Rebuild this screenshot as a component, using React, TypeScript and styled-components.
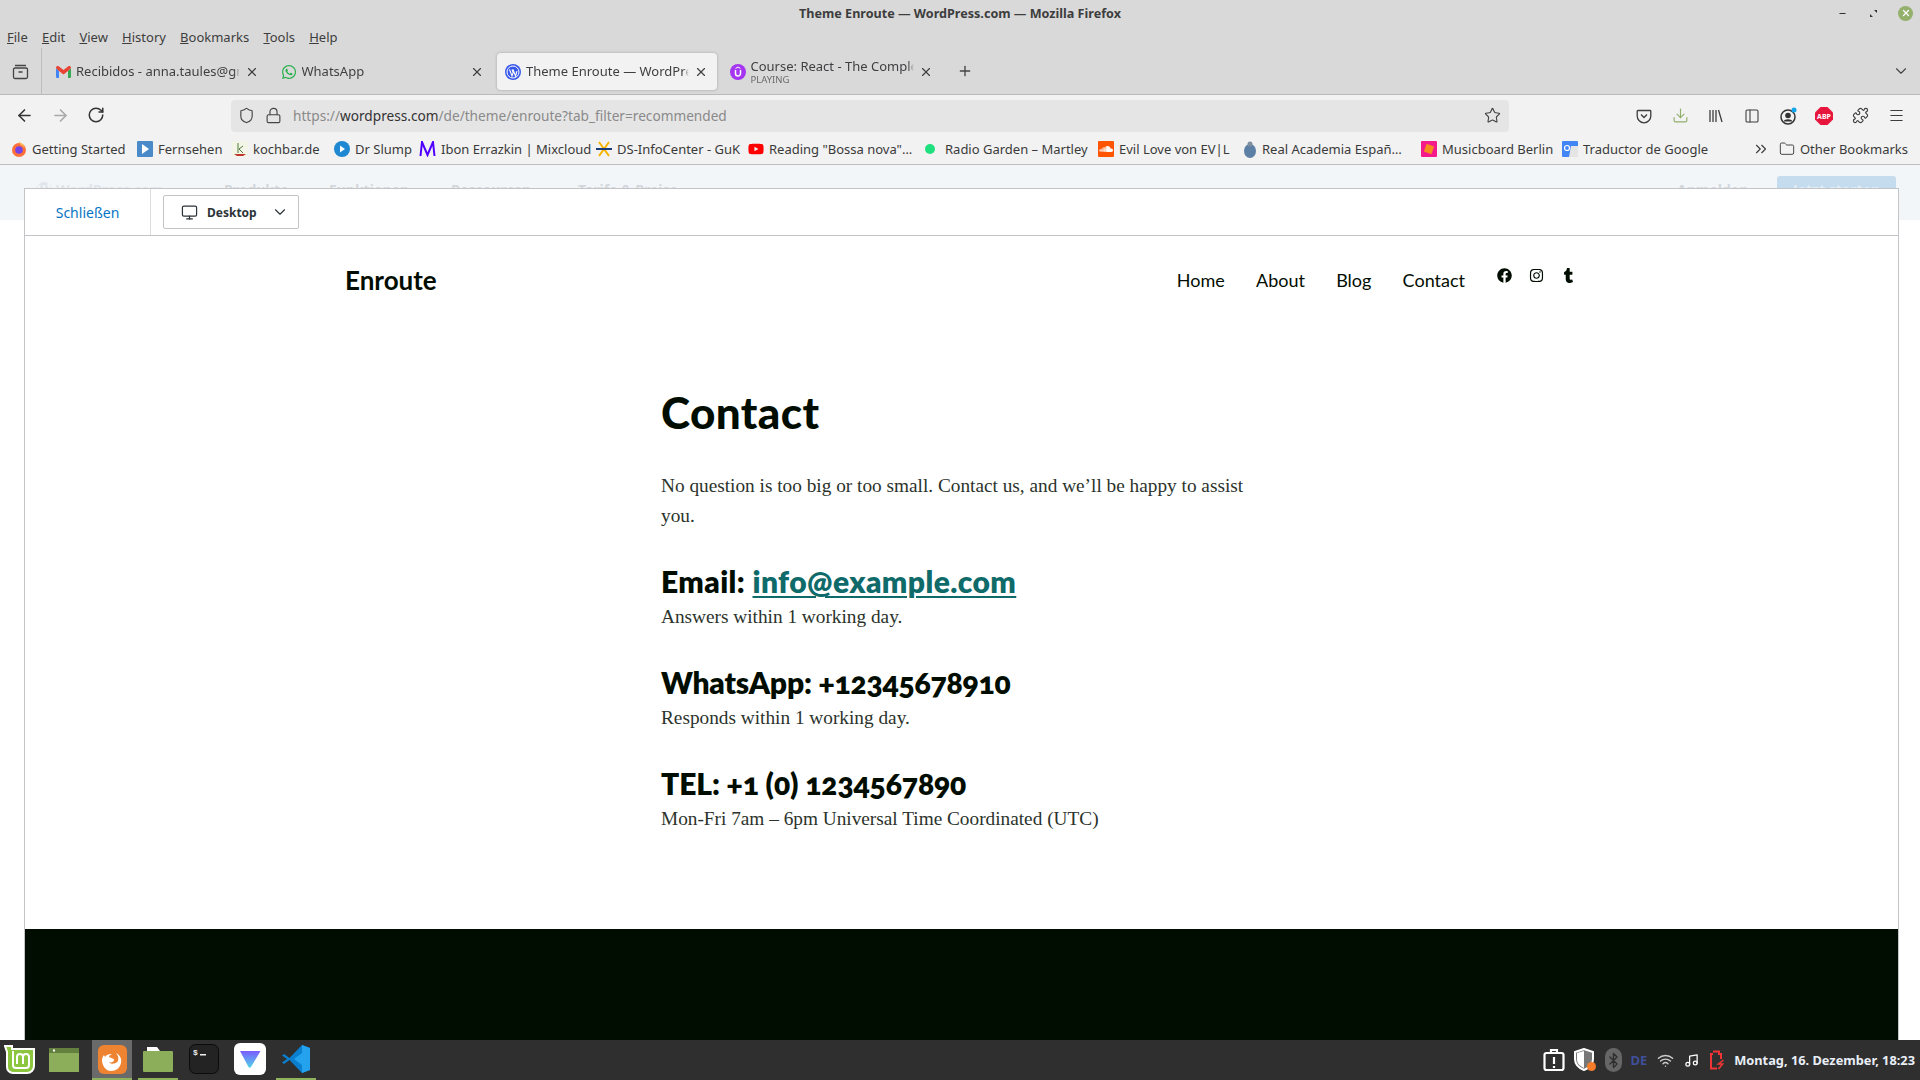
import { ReactNode } from "react"
import styled, { createGlobalStyle } from "styled-components"
import {
  ArrowLeft, ArrowRight, RotateCw, Shield, Lock, Star, Download, PanelLeft, Puzzle, Menu, X, Plus,
  ChevronDown, ChevronsRight, Folder, Monitor, Music, Wifi, Bluetooth, Minus,
} from "lucide-react"
import { FaFacebook, FaInstagram, FaTumblr, FaWhatsapp, FaYoutube, FaSoundcloud, FaWordpress } from "react-icons/fa"

const GlobalStyle = createGlobalStyle`
  html, body { margin: 0; padding: 0; background: #fff; }
  * { box-sizing: border-box; }
`

const Screen = styled.div`
  width: 1920px;
  height: 1080px;
  display: flex;
  flex-direction: column;
  overflow: hidden;
  font-family: "Noto Sans", sans-serif;
  color: #3a3a3c;
`

/* ---------- browser chrome ---------- */
const Chrome = styled.div`
  flex: none;
  background: #d9d9d9;
  height: 95px;
  border-bottom: 1px solid #b9b9b9;
  display: flex;
  flex-direction: column;
`
const TitleBar = styled.div`
  height: 26px;
  display: flex;
  align-items: center;
  justify-content: flex-end;
  position: relative;
  padding-right: 7px;
  gap: 19px;
`
const TitleText = styled.div`
  position: absolute;
  left: 0;
  right: 0;
  text-align: center;
  font: 700 12.6px "Noto Sans", sans-serif;
  color: #3d3d3d;
`
const CloseDot = styled.span`
  width: 15px;
  height: 15px;
  border-radius: 50%;
  background: #93b06d;
  color: #fff;
  display: flex;
  align-items: center;
  justify-content: center;
`
const WinBtn = styled.span`
  width: 12px;
  display: flex;
  justify-content: center;
  color: #333;
`
const MenuBar = styled.div`
  height: 22px;
  display: flex;
  align-items: center;
  padding-left: 7px;
  gap: 14.2px;
  font-size: 13px;
  color: #3d3d3d;
  span::first-letter { text-decoration: underline; }
`
const TabRow = styled.div`
  height: 46px;
  display: flex;
  align-items: center;
`
const SideBtn = styled.div`
  width: 42px;
  height: 46px;
  border-right: 1px solid #bdbdbd;
  display: flex;
  align-items: center;
  justify-content: center;
  color: #444;
  margin-right: 6px;
`
const Tab = styled.div<{ $active?: boolean }>`
  width: 220px;
  height: 37px;
  margin-top: 1px;
  margin-right: 4.5px;
  padding: 0 9px 0 8px;
  display: flex;
  align-items: center;
  gap: 5px;
  border-radius: 4px;
  font-size: 13px;
  color: #3f3f41;
  background: ${(p) => (p.$active ? "#f2f2f2" : "transparent")};
  box-shadow: ${(p) => (p.$active ? "0 0 3px rgba(0,0,0,.25)" : "none")};
`
const TabLabel = styled.div`
  flex: 1;
  min-width: 0;
  white-space: nowrap;
  overflow: hidden;
  line-height: 15px;
  mask-image: linear-gradient(to left, transparent 0, #000 6px);
`
const TabSub = styled.div`
  font-size: 9.5px;
  line-height: 11px;
  color: #6a6a6a;
`
const NewTab = styled.div`
  margin-left: 11px;
  display: flex;
  color: #444;
`
const TabEnd = styled.div`
  margin-left: auto;
  padding-right: 10px;
  display: flex;
  color: #444;
`
const NavBar = styled.div`
  flex: none;
  height: 37px;
  background: #f2f2f2;
  display: flex;
  align-items: center;
  padding-top: 4px;
`
const NavBtns = styled.div`
  width: 231px;
  padding-left: 15px;
  display: flex;
  gap: 17px;
  color: #333;
`
const UrlBar = styled.div`
  width: 1278px;
  height: 32px;
  border-radius: 4px;
  background: #e5e5e5;
  display: flex;
  align-items: center;
  padding: 0 8px 0 7px;
  color: #444;
`
const UrlLock = styled.span`
  margin-left: 10px;
  display: flex;
`
const UrlText = styled.div`
  margin-left: 11px;
  flex: 1;
  font-size: 13.65px;
  color: #8a8a8a;
  b { font-weight: 400; color: #333; }
`
const ToolIcons = styled.div`
  flex: 1;
  display: flex;
  align-items: center;
  padding-left: 126px;
  gap: 18px;
  color: #3d3d3d;
`
const IconSlot = styled.span`
  width: 18px;
  height: 18px;
  display: flex;
  align-items: center;
  justify-content: center;
  position: relative;
`
const Bookmarks = styled.div`
  flex: none;
  height: 33px;
  background: #f2f2f2;
  border-bottom: 1px solid #bdbdbd;
  display: flex;
  align-items: center;
  padding: 2px 12px 0 11px;
  font-size: 13px;
  color: #3a3a3a;
  white-space: nowrap;
`
const Bookmark = styled.div<{ $w: number }>`
  width: ${(p) => p.$w}px;
  display: flex;
  align-items: center;
  gap: 5px;
  flex: none;
  svg { flex: none; }
`
const BookmarkEnd = styled.div`
  margin-left: auto;
  display: flex;
  align-items: center;
  gap: 5px;
`
const OverflowChevron = styled.span`
  display: flex;
  margin-right: 4px;
`

/* ---------- wordpress.com page ---------- */
const Viewport = styled.div`
  flex: 1;
  min-height: 0;
  display: flex;
  flex-direction: column;
  background: linear-gradient(#f3f6f9 55px, #fff 55px);
`
const GhostNav = styled.div`
  height: 23px;
  flex: none;
  overflow: hidden;
  display: flex;
  padding-top: 11px;
  padding-left: 36px;
  padding-right: 24px;
  font-size: 14px;
  font-weight: 700;
  color: #d3d8dd;
  white-space: nowrap;
  line-height: 27px;
`
const GhostLogo = styled.span`
  width: 188px;
  flex: none;
  display: flex;
  gap: 4px;
  color: #dfe5ea;
  svg { margin-top: 5px; flex: none; }
`
const GhostItem = styled.span<{ $w: number }>`
  width: ${(p) => p.$w}px;
  flex: none;
`
const GhostRight = styled.span`
  margin-left: auto;
  width: 100px;
  flex: none;
`
const GhostCta = styled.span`
  width: 119px;
  height: 30px;
  border-radius: 3px;
  background: #c5dcee;
  color: #e4eef6;
  text-align: center;
`
const Preview = styled.div`
  flex: 1;
  min-height: 0;
  margin: 0 21px 0 24px;
  display: flex;
  flex-direction: column;
  background: #fff;
  border: solid #c3c4c7;
  border-width: 1px 1px 0 1px;
`
const PreviewBar = styled.div`
  flex: none;
  height: 47px;
  display: flex;
  align-items: stretch;
  border-bottom: 1px solid #c3c4c7;
`
const CloseLink = styled.a`
  width: 126px;
  border-right: 1px solid #dcdcde;
  display: flex;
  align-items: center;
  justify-content: center;
  font: 400 14px "Noto Sans", sans-serif;
  color: #0675c4;
`
const DeviceSelect = styled.div`
  margin: 6px 0 6px 12px;
  width: 136px;
  border: 1px solid #c3c4c7;
  border-radius: 2px;
  display: flex;
  align-items: center;
  padding: 0 9px 0 17px;
  color: #2c3338;
  font: 700 12px "Noto Sans", sans-serif;
  gap: 9px;
  svg:last-child { margin-left: auto; }
`
const Site = styled.div`
  flex: 1;
  min-height: 0;
  display: flex;
  flex-direction: column;
  font-family: Lato, sans-serif;
  color: #020d02;
`
const SiteHeader = styled.header`
  flex: none;
  height: 88px;
  margin: 0 320px;
  display: flex;
  align-items: center;
`
const Brand = styled.div`
  font: 700 26px Lato, sans-serif;
  flex: 1;
`
const SiteNav = styled.nav`
  display: flex;
  gap: 31.2px;
  font: 400 18px Lato, sans-serif;
`
const Socials = styled.div`
  margin-left: 32px;
  margin-right: 2px;
  display: flex;
  gap: 17px;
  margin-bottom: 9px;
`
const Main = styled.main`
  flex: 1;
  width: 590px;
  margin-left: 636px;
  padding-top: 62px;
`
const H1 = styled.h1`
  margin: 0 0 33px;
  font: 900 44px/52px Lato, sans-serif;
  letter-spacing: 0.4px;
`
const Para = styled.p<{ $gap?: number }>`
  margin: 0 0 ${(p) => p.$gap ?? 0}px;
  font: 400 19.3px/30px "Liberation Serif", serif;
  color: #2b332b;
`
const ContactNote = styled(Para)`
  padding-top: 2px;
`
const H3 = styled.h3<{ $track: number }>`
  margin: 0;
  font: 800 30px/37px Lato, sans-serif;
  font-variant-numeric: oldstyle-nums;
  letter-spacing: ${(p) => p.$track}px;
  a { color: #0f6a6a; text-decoration: underline; text-underline-offset: 3px; text-decoration-thickness: 2px; }
`
const Footer = styled.footer`
  flex: none;
  height: 111px;
  background: #020d02;
`

/* ---------- mint panel ---------- */
const Panel = styled.div`
  flex: none;
  height: 40px;
  background: #2f2f2f;
  display: flex;
  align-items: center;
  color: #fff;
`
const Launcher = styled.div`
  display: flex;
  gap: 6px;
  height: 100%;
`
const Slot = styled.div<{ $open?: boolean; $hot?: boolean; $nudge?: number }>`
  width: 40px;
  height: 40px;
  padding-right: ${(p) => p.$nudge ?? 0}px;
  display: flex;
  align-items: center;
  justify-content: center;
  background: ${(p) => (p.$hot ? "#6a6a6a" : "transparent")};
  border-bottom: 2px solid ${(p) => (p.$open ? "#8fb35c" : "transparent")};
`
const Tray = styled.div`
  margin-left: auto;
  display: flex;
  align-items: center;
  gap: 10px;
  padding-right: 5px;
`
const TrayGroup = styled.div`
  display: flex;
  align-items: center;
  gap: 8px;
`
const BtPill = styled.span`
  width: 17px;
  height: 24px;
  border-radius: 9px;
  background: #666;
  color: #2f2f2f;
  display: flex;
  align-items: center;
  justify-content: center;
`
const Clock = styled.div`
  font: 700 12.8px "Noto Sans", sans-serif;
  color: #e8eef6;
`
const LangTag = styled.span`
  font: 700 13px "Noto Sans", sans-serif;
  color: #3f4f9b;
`

/* ---------- small drawings ---------- */
const Box = ({ c, children }: { c: string; children?: ReactNode }) => (
  <svg width="16" height="16" viewBox="0 0 16 16">
    <rect width="16" height="16" fill={c} rx="1" />
    {children}
  </svg>
)
const Gmail = () => (
  <svg width="15" height="12" viewBox="0 0 15 12">
    <path d="M0 2v9a1 1 0 0 0 1 1h2V5z" fill="#4285f4" />
    <path d="M15 2v9a1 1 0 0 1-1 1h-2V5z" fill="#34a853" />
    <path d="M0 2c0-2 2-2.500 3-1.500l4.500 3.500L12 .5c1-1 3-.5 3 1.500L12 5 7.500 8.500 3 5z" fill="#ea4335" />
  </svg>
)
const WpIcon = () => (
  <svg width="16" height="16" viewBox="0 0 16 16">
    <circle cx="8" cy="8" r="8" fill="#3858e9" />
    <circle cx="8" cy="8" r="6" fill="none" stroke="#fff" />
    <path d="M4.500 5.500 7 12l1.200-3.500L7 5.500m1 0L10.500 12 12 7" fill="none" stroke="#fff" strokeWidth="1.100" />
  </svg>
)
const UdemyIcon = () => (
  <svg width="16" height="16" viewBox="0 0 16 16">
    <circle cx="8" cy="8" r="8" fill="#a435f0" />
    <path d="M5.500 6v3.500a2.500 2.500 0 0 0 5 0V6" fill="none" stroke="#fff" strokeWidth="1.500" />
    <path d="M5.500 4.500 8 3l2.500 1.500" fill="none" stroke="#fff" />
  </svg>
)
const FirefoxSmall = () => (
  <svg width="16" height="16" viewBox="0 0 16 16">
    <circle cx="8" cy="9" r="7" fill="#ff7139" />
    <path d="M8 0c1 2 5 3 6 7-3-3-6-3-6-7z" fill="#ffbd4f" />
    <circle cx="8" cy="9" r="3.800" fill="#7542e5" />
  </svg>
)
const ContainerIcon = () => (
  <svg width="17" height="17" viewBox="0 0 17 17" fill="none" stroke="#444" strokeWidth="1.300">
    <rect x="1.500" y="5" width="14" height="10.500" rx="1.500" />
    <path d="M3 2.500h11M6.500 9h4" />
  </svg>
)
const LibraryIcon = () => (
  <svg width="16" height="16" viewBox="0 0 16 16" fill="none" stroke="#3d3d3d" strokeWidth="1.300">
    <path d="M2 2v12M5 2v12M8 2v12M10.500 2l3.500 12" />
  </svg>
)
const PocketIcon = () => (
  <svg width="16" height="16" viewBox="0 0 16 16" fill="none" stroke="#3d3d3d" strokeWidth="1.300">
    <path d="M2 2.500h12a.8.8 0 0 1 .8.8V8a6.800 6.800 0 0 1-13.600 0V3.300a.8.8 0 0 1 .8-.8z" />
    <path d="m5 6.500 3 3 3-3" />
  </svg>
)
const ProfileIcon = () => (
  <svg width="18" height="18" viewBox="0 0 18 18">
    <circle cx="9" cy="10" r="7" fill="none" stroke="#333" strokeWidth="1.500" />
    <circle cx="9" cy="8.500" r="2.800" fill="#333" />
    <path d="M4.500 14.500c1-3 8-3 9 0z" fill="#333" />
    <circle cx="15" cy="3" r="2.500" fill="#12a5ee" />
  </svg>
)
const AbpIcon = () => (
  <svg width="18" height="18" viewBox="0 0 18 18">
    <path d="M5.500 0h7L18 5.500v7L12.500 18h-7L0 12.500v-7z" fill="#e6163d" />
    <text x="9" y="12" textAnchor="middle" fontSize="7" fontWeight="700" fill="#fff" fontFamily="Noto Sans">ABP</text>
  </svg>
)
const MintLogo = () => (
  <svg width="32" height="30" viewBox="0 0 32 30">
    <path d="M1 2h7v3c1 0 22 0 22 0v17a7 7 0 0 1-7 7H9a6 6 0 0 1-6-6V8z" fill="#8cc63f" stroke="#fff" strokeWidth="2" />
    <path d="M9 7v14a3 3 0 0 0 3 3h10a3 3 0 0 0 3-3v-8a3 3 0 0 0-6 0v7m0-7a3 3 0 0 0-6 0v7" fill="none" stroke="#fff" strokeWidth="2" />
  </svg>
)
const WindowIcon = () => (
  <svg width="30" height="25" viewBox="0 0 30 25">
    <rect width="30" height="24" y="1" fill="#8cae5b" />
    <rect width="30" height="5" y="1" fill="#64803f" />
    <rect x="4" y="2.500" width="2" height="2" fill="#fff" />
  </svg>
)
const FirefoxIcon = () => (
  <svg width="29" height="29" viewBox="0 0 29 29">
    <rect width="29" height="29" rx="6" fill="#ee8332" />
    <path d="M4 15c0-2 1-4 2-5l1 2c2-3 5-3 7-3-2 1-3 2-3 3 1 1 5 1 5 3 0 2-3 3-5 2 2 3 7 2 9-1 1-3 0-6-2-8 4 2 6 6 5 10-1 5-5 8-10 8-5 0-9-5-9-11z" fill="#fff" />
  </svg>
)
const FolderIcon = () => (
  <svg width="30" height="25" viewBox="0 0 30 25">
    <path d="M4 0h10l3 4H4z" fill="#fff" />
    <path d="M0 5a1 1 0 0 1 1-1h28a1 1 0 0 1 1 1v19a1 1 0 0 1-1 1H1a1 1 0 0 1-1-1z" fill="#8cae5b" />
  </svg>
)
const TerminalIcon = () => (
  <svg width="30" height="30" viewBox="0 0 30 30">
    <rect x=".5" y=".5" width="29" height="29" rx="6" fill="#232323" stroke="#0b0b0b" />
    <text x="4" y="11" fontSize="8" fontWeight="700" fill="#eee" fontFamily="Liberation Mono">$</text>
    <rect x="11" y="10" width="6" height="1.500" fill="#eee" />
  </svg>
)
const ProtonIcon = () => (
  <svg width="32" height="32" viewBox="0 0 32 32">
    <rect width="32" height="32" rx="6" fill="#fff" />
    <defs>
      <linearGradient id="pv" x1="0" y1="0" x2="0" y2="1">
        <stop offset="0" stopColor="#7c5cff" />
        <stop offset="1" stopColor="#4fd4e8" />
      </linearGradient>
    </defs>
    <path d="M6 8h20.500L17 24a1.500 1.500 0 0 1-2.500 0z" fill="url(#pv)" />
  </svg>
)
const VsCodeIcon = () => (
  <svg width="30" height="30" viewBox="0 0 30 30">
    <path d="M21 1 8.500 14 3 10 1 11.500 6 15l-5 3.500L3 20l5.500-4L21 29l8-3V4z" fill="#0a7fd0" />
    <path d="M21 1l8 3v22l-8 3zM21 9v12l-8-6z" fill="#24a2ee" fillRule="evenodd" />
  </svg>
)
const ClipIcon = () => (
  <svg width="22" height="24" viewBox="0 0 22 24" fill="none" stroke="#fff" strokeWidth="2.200">
    <rect x="1.500" y="5" width="19" height="17" rx="2" />
    <path d="M8 5V2h6v3M11 9v7M11 18v2" />
  </svg>
)
const ShieldIcon = () => (
  <svg width="24" height="24" viewBox="0 0 24 24">
    <path d="M11 1 2 4v7c0 6 4 9 9 11 5-2 9-5 9-11V4z" fill="#777" stroke="#fff" strokeWidth="2" />
    <path d="M11 3v17c-4-2-7-4-7-9V5z" fill="#fff" />
    <circle cx="18.500" cy="18.500" r="4.500" fill="#f47c2a" />
  </svg>
)
const BatteryIcon = () => (
  <svg width="15" height="20" viewBox="0 0 15 20" fill="none" stroke="#ef3535" strokeWidth="2">
    <path d="M4 1.500h6V4h2v5M8 18.500H2V4h2" />
    <path d="M14.500 10l-5 4h4l-4 5" strokeWidth="1.600" />
  </svg>
)

const bookmarks: { w: number; label: string; icon: ReactNode }[] = [
  { w: 126, label: "Getting Started", icon: <FirefoxSmall /> },
  { w: 95, label: "Fernsehen", icon: <Box c="#4a8ac9"><path d="M5 3l7 5-7 5z" fill="#fff" /></Box> },
  { w: 102, label: "kochbar.de", icon: <Box c="#f3f6e6"><path d="M6 2v10M7 8l4-3M7 8l4 4" stroke="#4e7a3a" fill="none" /><path d="M2 13h12l-3 2H5z" fill="#c1342a" /></Box> },
  { w: 85, label: "Dr Slump", icon: <svg width="16" height="16" viewBox="0 0 16 16"><circle cx="8" cy="8" r="8" fill="#1e88d2" /><path d="M6 4.500 11 8l-5 3.500z" fill="#fff" /></svg> },
  { w: 177, label: "Ibon Errazkin | Mixcloud", icon: <svg width="17" height="16" viewBox="0 0 17 16" fill="none" stroke="#5000ff" strokeWidth="2"><path d="M1.500 15 3 1l5.500 13L14 1l1.500 14" /></svg> },
  { w: 152, label: "DS-InfoCenter - GuK", icon: <svg width="16" height="16" viewBox="0 0 16 16"><path d="M3 1l5 7 5-7M3 15l5-7 5 7" stroke="#f5b400" strokeWidth="2" fill="none" /><rect y="7" width="16" height="2" fill="#1a3a7a" /></svg> },
  { w: 176, label: 'Reading "Bossa nova"…', icon: <FaYoutube size={16} color="#f00" /> },
  { w: 174, label: "Radio Garden – Martley", icon: <svg width="16" height="12" viewBox="0 0 16 12"><circle cx="6" cy="6" r="5" fill="#1ee07f" /></svg> },
  { w: 145, label: "Evil Love von EV|L", icon: <Box c="#f50"><FaSoundcloud x={1} y={1} size={14} color="#fff" /></Box> },
  { w: 178, label: "Real Academia Españ…", icon: <svg width="14" height="17" viewBox="0 0 14 17"><ellipse cx="7" cy="10" rx="6" ry="7" fill="#5c7fa6" /><circle cx="7" cy="3" r="2.500" fill="#7f8fa0" /></svg> },
  { w: 141, label: "Musicboard Berlin", icon: <Box c="#f41a8c"><rect x="4" y="4" width="8" height="8" fill="#f58a1f" transform="rotate(20 8 8)" /></Box> },
  { w: 150, label: "Traductor de Google", icon: <Box c="#4285f4"><path d="M9 5h7v11H7z" fill="#e5e5e5" /><circle cx="5" cy="7" r="2.500" fill="none" stroke="#fff" strokeWidth="1.200" /></Box> },
]

export default function App() {
  return (
    <Screen>
      <GlobalStyle />
      <Chrome>
        <TitleBar>
          <TitleText>Theme Enroute — WordPress.com — Mozilla Firefox</TitleText>
          <WinBtn><Minus size={9} strokeWidth={3} /></WinBtn>
          <WinBtn><svg width="9" height="9" viewBox="0 0 9 9"><path d="M5 1h3v3zM1 5v3h3z" fill="#333" /></svg></WinBtn>
          <CloseDot><X size={10} strokeWidth={3} /></CloseDot>
        </TitleBar>
        <MenuBar>
          <span>File</span><span>Edit</span><span>View</span><span>History</span><span>Bookmarks</span><span>Tools</span><span>Help</span>
        </MenuBar>
        <TabRow>
          <SideBtn><ContainerIcon /></SideBtn>
          <Tab><Gmail /><TabLabel>Recibidos - anna.taules@gmail.com</TabLabel><X size={14} /></Tab>
          <Tab><FaWhatsapp size={16} color="#25b04a" /><TabLabel>WhatsApp</TabLabel><X size={14} /></Tab>
          <Tab $active><WpIcon /><TabLabel>Theme Enroute — WordPress.com</TabLabel><X size={14} /></Tab>
          <Tab>
            <UdemyIcon />
            <TabLabel>Course: React - The Complete Guide<TabSub>PLAYING</TabSub></TabLabel>
            <X size={14} />
          </Tab>
          <NewTab><Plus size={16} /></NewTab>
          <TabEnd><ChevronDown size={18} strokeWidth={1.5} /></TabEnd>
        </TabRow>
      </Chrome>
      <NavBar>
        <NavBtns>
          <ArrowLeft size={19} />
          <ArrowRight size={19} color="#a8a8a8" />
          <RotateCw size={18} />
        </NavBtns>
        <UrlBar>
          <Shield size={17} strokeWidth={1.6} />
          <UrlLock><Lock size={17} strokeWidth={1.6} /></UrlLock>
          <UrlText>https://<b>wordpress.com</b>/de/theme/enroute?tab_filter=recommended</UrlText>
          <Star size={17} strokeWidth={1.6} />
        </UrlBar>
        <ToolIcons>
          <IconSlot><PocketIcon /></IconSlot>
          <IconSlot><Download size={17} color="#8fae6a" strokeWidth={1.6} /></IconSlot>
          <IconSlot><LibraryIcon /></IconSlot>
          <IconSlot><PanelLeft size={16} strokeWidth={1.6} /></IconSlot>
          <IconSlot><ProfileIcon /></IconSlot>
          <IconSlot><AbpIcon /></IconSlot>
          <IconSlot><Puzzle size={17} strokeWidth={1.6} /></IconSlot>
          <IconSlot><Menu size={17} strokeWidth={1.6} /></IconSlot>
        </ToolIcons>
      </NavBar>
      <Bookmarks>
        {bookmarks.map((b) => (
          <Bookmark key={b.label} $w={b.w}>{b.icon}{b.label}</Bookmark>
        ))}
        <BookmarkEnd>
          <OverflowChevron><ChevronsRight size={18} strokeWidth={1.5} /></OverflowChevron>
          <Folder size={16} strokeWidth={1.4} />
          Other Bookmarks
        </BookmarkEnd>
      </Bookmarks>

      <Viewport>
        <GhostNav>
          <GhostLogo><FaWordpress size={16} />WordPress.com</GhostLogo>
          <GhostItem $w={105}>Produkte ⌄</GhostItem>
          <GhostItem $w={122}>Funktionen ⌄</GhostItem>
          <GhostItem $w={127}>Ressourcen ⌄</GhostItem>
          <GhostItem $w={120}>Tarife &amp; Preise</GhostItem>
          <GhostRight>Anmelden</GhostRight>
          <GhostCta>Jetzt starten</GhostCta>
        </GhostNav>
        <Preview>
          <PreviewBar>
            <CloseLink>Schließen</CloseLink>
            <DeviceSelect>
              <Monitor size={17} strokeWidth={1.7} />
              Desktop
              <ChevronDown size={18} strokeWidth={1.5} />
            </DeviceSelect>
          </PreviewBar>
          <Site>
            <SiteHeader>
              <Brand>Enroute</Brand>
              <SiteNav>
                <span>Home</span><span>About</span><span>Blog</span><span>Contact</span>
              </SiteNav>
              <Socials>
                <FaFacebook size={15} />
                <FaInstagram size={15} />
                <FaTumblr size={15} />
              </Socials>
            </SiteHeader>
            <Main>
              <H1>Contact</H1>
              <Para $gap={32}>No question is too big or too small. Contact us, and we’ll be happy to assist you.</Para>
              <H3 $track={0.4}>Email: <a>info@example.com</a></H3>
              <ContactNote $gap={32}>Answers within 1 working day.</ContactNote>
              <H3 $track={-0.2}>WhatsApp: +12345678910</H3>
              <ContactNote $gap={32}>Responds within 1 working day.</ContactNote>
              <H3 $track={-0.1}>TEL: +1 (0) 1234567890</H3>
              <ContactNote>Mon-Fri 7am – 6pm Universal Time Coordinated (UTC)</ContactNote>
            </Main>
            <Footer />
          </Site>
        </Preview>
      </Viewport>

      <Panel>
        <Launcher>
          <Slot><MintLogo /></Slot>
          <Slot $nudge={4}><WindowIcon /></Slot>
          <Slot $hot $open><FirefoxIcon /></Slot>
          <Slot $open><FolderIcon /></Slot>
          <Slot><TerminalIcon /></Slot>
          <Slot><ProtonIcon /></Slot>
          <Slot $open><VsCodeIcon /></Slot>
        </Launcher>
        <Tray>
          <TrayGroup>
            <ClipIcon />
            <ShieldIcon />
            <BtPill><Bluetooth size={17} /></BtPill>
            <LangTag>DE</LangTag>
          </TrayGroup>
          <Wifi size={17} color="#ccc" />
          <Music size={15} />
          <BatteryIcon />
          <Clock>Montag, 16. Dezember, 18:23</Clock>
        </Tray>
      </Panel>
    </Screen>
  )
}
